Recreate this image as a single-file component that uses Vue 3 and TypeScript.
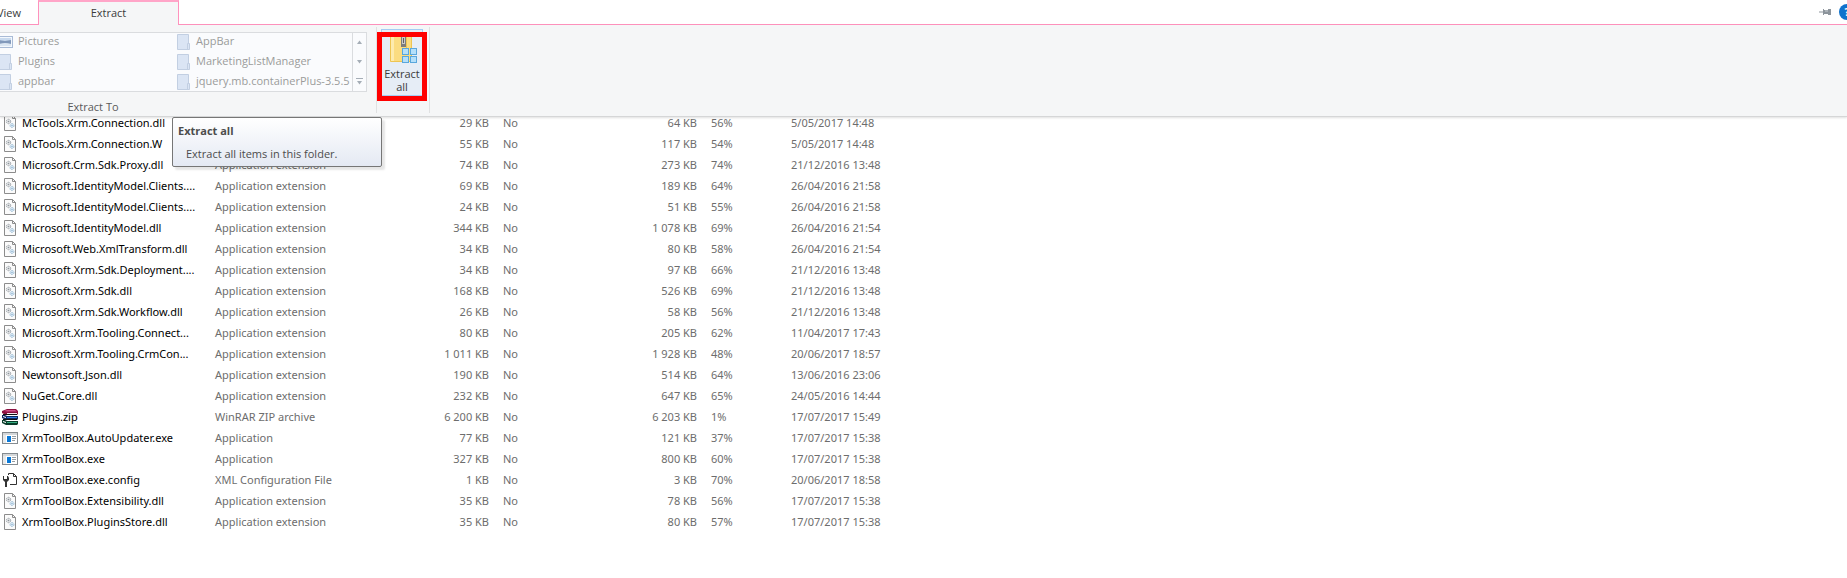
<script setup lang="ts">
type Kind = 'dll' | 'zip' | 'exe' | 'config'

interface FileRow {
  name: string
  kind: Kind
  packed: string
  size: string
  ratio: string
  date: string
}

const typeNames: Record<Kind, string> = {
  dll: 'Application extension',
  zip: 'WinRAR ZIP archive',
  exe: 'Application',
  config: 'XML Configuration File',
}

const file = (name: string, kind: Kind, packed: string, size: string, ratio: string, date: string): FileRow => ({
  name, kind, packed, size, ratio, date,
})

const files: FileRow[] = [
  file('McTools.Xrm.Connection.dll', 'dll', '29 KB', '64 KB', '56%', '5/05/2017 14:48'),
  file('McTools.Xrm.Connection.W', 'dll', '55 KB', '117 KB', '54%', '5/05/2017 14:48'),
  file('Microsoft.Crm.Sdk.Proxy.dll', 'dll', '74 KB', '273 KB', '74%', '21/12/2016 13:48'),
  file('Microsoft.IdentityModel.Clients....', 'dll', '69 KB', '189 KB', '64%', '26/04/2016 21:58'),
  file('Microsoft.IdentityModel.Clients....', 'dll', '24 KB', '51 KB', '55%', '26/04/2016 21:58'),
  file('Microsoft.IdentityModel.dll', 'dll', '344 KB', '1 078 KB', '69%', '26/04/2016 21:54'),
  file('Microsoft.Web.XmlTransform.dll', 'dll', '34 KB', '80 KB', '58%', '26/04/2016 21:54'),
  file('Microsoft.Xrm.Sdk.Deployment....', 'dll', '34 KB', '97 KB', '66%', '21/12/2016 13:48'),
  file('Microsoft.Xrm.Sdk.dll', 'dll', '168 KB', '526 KB', '69%', '21/12/2016 13:48'),
  file('Microsoft.Xrm.Sdk.Workflow.dll', 'dll', '26 KB', '58 KB', '56%', '21/12/2016 13:48'),
  file('Microsoft.Xrm.Tooling.Connect...', 'dll', '80 KB', '205 KB', '62%', '11/04/2017 17:43'),
  file('Microsoft.Xrm.Tooling.CrmCon...', 'dll', '1 011 KB', '1 928 KB', '48%', '20/06/2017 18:57'),
  file('Newtonsoft.Json.dll', 'dll', '190 KB', '514 KB', '64%', '13/06/2016 23:06'),
  file('NuGet.Core.dll', 'dll', '232 KB', '647 KB', '65%', '24/05/2016 14:44'),
  file('Plugins.zip', 'zip', '6 200 KB', '6 203 KB', '1%', '17/07/2017 15:49'),
  file('XrmToolBox.AutoUpdater.exe', 'exe', '77 KB', '121 KB', '37%', '17/07/2017 15:38'),
  file('XrmToolBox.exe', 'exe', '327 KB', '800 KB', '60%', '17/07/2017 15:38'),
  file('XrmToolBox.exe.config', 'config', '1 KB', '3 KB', '70%', '20/06/2017 18:58'),
  file('XrmToolBox.Extensibility.dll', 'dll', '35 KB', '78 KB', '56%', '17/07/2017 15:38'),
  file('XrmToolBox.PluginsStore.dll', 'dll', '35 KB', '80 KB', '57%', '17/07/2017 15:38'),
]

const destinations: string[] = [
  'Pictures', 'AppBar',
  'Plugins', 'MarketingListManager',
  'appbar', 'jquery.mb.containerPlus-3.5.5',
]
</script>

<template>
  <div class="window">
    <header class="top">
      <nav class="tabs">
        <button class="tab view" type="button">View</button>
        <button class="tab active" type="button">Extract</button>
        <div class="tools">
          <button class="tool" type="button" aria-label="Pin the ribbon">
            <svg width="12" height="8" viewBox="0 0 12 8"><path d="M0 4H5" stroke="#8d959c" stroke-width="1" /><path d="M4 1H5V2H9V1H12V7H9V6H5V7H4Z" fill="#8d959c" /><path d="M6 3H9" stroke="#c9ced2" /></svg>
          </button>
          <button class="tool help" type="button" aria-label="Help">?</button>
        </div>
      </nav>

      <section class="ribbon">
        <div class="group extract-to">
          <div class="gallery">
            <div class="items">
              <button v-for="(d, i) in destinations" :key="d" class="item" type="button">
                <svg v-if="i === 0" width="16" height="12" viewBox="0 0 16 12">
                  <rect x=".5" y=".5" width="15" height="11" fill="#f4f8fd" stroke="#a9bbd6" />
                  <rect x="2" y="2" width="12" height="8" fill="#c9daee" />
                  <path d="M2 4L8 5L14 4V8H2Z" fill="#8299bb" />
                  <path d="M2 8Q8 6 14 8V10H2Z" fill="#dce7f3" />
                </svg>
                <svg v-else width="13" height="16" viewBox="0 0 13 16">
                  <path d="M.5.5H11.5V9.5H12.5V15.5H.5Z" fill="#dbe5f4" stroke="#c2cfe2" />
                  <path d="M10.500 15V9.500H12" fill="none" stroke="#c2cfe2" />
                </svg>
                <span>{{ d }}</span>
              </button>
            </div>
            <div class="scroll">
              <button type="button" aria-label="Previous row"><svg width="7" height="7" viewBox="0 0 7 7"><path d="M3.500 1.500L6 5H1Z" fill="#a5adb6" /></svg></button>
              <button type="button" aria-label="Next row"><svg width="7" height="7" viewBox="0 0 7 7"><path d="M3.500 5.500L6 2H1Z" fill="#a5adb6" /></svg></button>
              <button type="button" aria-label="More destinations"><svg width="7" height="7" viewBox="0 0 7 7"><path d="M0 .5H7" stroke="#a5adb6" /><path d="M3.500 6.500L6 3H1Z" fill="#a5adb6" /></svg></button>
            </div>
          </div>
          <div class="caption">Extract To</div>
        </div>

        <div class="group extract-all">
          <button class="big" type="button" aria-describedby="extract-tip">
            <svg width="32" height="32" viewBox="0 0 32 32">
              <path d="M4.500 0H25.500V29.500H4.500Z" fill="#fbdc81" stroke="#eec552" />
              <path d="M5 0H8V29H5Z" fill="#fdebaf" />
              <path d="M20.500 0V20" stroke="#eec552" />
              <rect x="15" y="0" width="5" height="15" fill="#7c7c7c" />
              <path d="M16 1H19M16 3H19M16 9H19" stroke="#d8d8d8" />
              <rect x="16.500" y="5.500" width="2" height="6" fill="#5f5f5f" stroke="#c9c9c9" />
              <g fill="#b5e0fa" stroke="#5aa7dc">
                <rect x="16.500" y="16.500" width="6" height="6" /><rect x="24.500" y="16.500" width="6" height="6" />
                <rect x="16.500" y="24.500" width="6" height="6" /><rect x="24.500" y="24.500" width="6" height="6" />
              </g>
            </svg>
            <span>Extract<br>all</span>
          </button>
          <div class="highlight"></div>
        </div>
      </section>

      <div id="extract-tip" class="tip" role="tooltip">
        <strong>Extract all</strong>
        <p>Extract all items in this folder.</p>
      </div>
    </header>

    <main class="list">
      <table>
        <colgroup><col class="c-name"><col class="c-type"><col class="c-packed"><col class="c-lock"><col class="c-size"><col class="c-ratio"><col></colgroup>
        <tbody>
          <tr v-for="(f, i) in files" :key="i">
            <td class="name">
              <div class="label">
                <svg v-if="f.kind === 'dll'" width="16" height="16" viewBox="0 0 16 16">
                  <path d="M2.500.5H10.500L13.500 3.500V15.500H2.500Z" fill="#fbfbfb" stroke="#8c8c8c" />
                  <path d="M10.500.5V3.500H13.500" fill="none" stroke="#8c8c8c" />
                  <circle cx="6.500" cy="6.500" r="2.200" fill="#e2e4e6" stroke="#a0a6ab" stroke-dasharray="1.500 .7" /><circle cx="6.500" cy="6.500" r=".8" fill="#8b949b" />
                  <circle cx="10" cy="10.500" r="2" fill="#dcebf7" stroke="#9dbcd3" stroke-dasharray="1.500 .7" /><circle cx="10" cy="10.500" r=".7" fill="#86abc8" />
                </svg>
                <svg v-else-if="f.kind === 'zip'" width="16" height="16" viewBox="0 0 16 16">
                  <path d="M0 2L5 0H14L16 2V5L15 6H4L0 4Z" fill="#8c1040" /><path d="M2 2L5 1H13L15 2.500H5Z" fill="#d2508a" /><path d="M5 4.500H15" stroke="#f6e6ee" />
                  <path d="M0 6H3L5 7H16V10L15 11H4L0 9Z" fill="#0e2560" /><path d="M5 8.500H15" stroke="#2f7fe0" /><path d="M1 7.500L4 8.500" stroke="#fff" />
                  <path d="M0 11H3L5 12H16V15L15 16H4L0 14Z" fill="#083c2a" /><path d="M5 13.500H15" stroke="#35ad80" /><path d="M1 12.500L4 13.500" stroke="#fff" />
                  <path d="M1 5.500H15M1 10.500H15" stroke="#111" />
                </svg>
                <svg v-else-if="f.kind === 'exe'" width="16" height="16" viewBox="0 0 16 16">
                  <rect x=".5" y="2.500" width="15" height="11" fill="#fff" stroke="#858b90" />
                  <path d="M1 3H15V5H1Z" fill="#d4d7d9" /><path d="M1 5H4V13H1Z" fill="#e6e8e9" />
                  <rect x="5" y="6" width="4" height="6" fill="#0878d8" /><path d="M10 6.500H14M10 8.500H14M10 10.500H13" stroke="#949ba1" />
                </svg>
                <svg v-else width="16" height="16" viewBox="0 0 16 16">
                  <path d="M6.500 3V1.500H11.500L14.500 4.500V12.500H8" fill="#fff" stroke="#333" /><path d="M11.500 1.500V4.500H14.500" fill="none" stroke="#333" />
                  <path d="M1 4H2V7H5V4H6L7 6V8L5 10V15H3V10L1 8Z" fill="#333" />
                </svg>
                <span>{{ f.name }}</span>
              </div>
            </td>
            <td>{{ typeNames[f.kind] }}</td>
            <td class="num">{{ f.packed }}</td>
            <td>No</td>
            <td class="num">{{ f.size }}</td>
            <td>{{ f.ratio }}</td>
            <td>{{ f.date }}</td>
          </tr>
        </tbody>
      </table>
    </main>
  </div>
</template>

<style>
body { background: #fff; overflow: hidden; }
</style>

<style scoped>
.window { min-height: 100vh; overflow: hidden; background: #fff; font-family: "Open Sans", "Noto Sans", sans-serif; font-size: 11px; color: #6d6d6d; }
button { font: inherit; margin: 0; padding: 0; border: 0; background: none; color: inherit; }
svg { display: block; flex: none; }

.top { position: relative; z-index: 2; }
.tabs { display: flex; height: 24px; border-bottom: 1px solid #ff92bd; color: #3b3b3b; }
.tab { height: 25px; }
.view { width: 38px; padding-right: 17px; line-height: 26px; display: flex; justify-content: flex-end; }
.active { width: 141px; box-sizing: border-box; padding-bottom: 2px; line-height: 20px; background: #f5f6f7; border: 1px solid #ff92bd; border-top: 2px solid #ffa5c8; border-bottom: 0; }
.tools { margin-left: auto; margin-right: -8px; display: flex; align-items: center; gap: 8px; }
.help { width: 16px; height: 16px; border-radius: 8px; background: #0f72cc; color: #fff; font-weight: 700; line-height: 16px; }

.ribbon { display: flex; box-sizing: border-box; height: 92px; background: #f5f6f7; border-bottom: 1px solid #d5d6d7; box-shadow: 0 1px 2px #0000001f; }
.group { box-sizing: border-box; height: 86px; margin-top: 2px; border-right: 1px solid #e0e1e2; }
.extract-to { width: 377px; padding-top: 5px; }
.gallery { display: flex; box-sizing: border-box; width: 371px; height: 60px; margin-left: -4px; border: 1px solid #dadcdf; background: #fafbfd; }
.items { flex: 1; display: grid; grid-template-columns: 178px 1fr; grid-template-rows: repeat(3, 20px); padding-left: 2px; margin-bottom: -2px; }
.item { display: flex; align-items: center; gap: 6px; height: 18px; line-height: 16px; color: #9b9b9b; white-space: nowrap; }
.item span { padding-bottom: 2px; }
.item:first-child { gap: 5px; margin-left: -2px; }
.scroll { width: 13px; display: flex; flex-direction: column; border-left: 1px solid #dadcdf; }
.scroll button { flex: 1; display: flex; align-items: center; justify-content: center; }
.caption { width: 186px; margin-top: 7px; line-height: 16px; text-align: center; color: #5a5a5a; }
.extract-all { position: relative; width: 53px; padding: 2px 0 0 4px; }
.big { box-sizing: border-box; width: 42px; height: 67px; border: 1px solid #a5cdf3; background: #e6edf6; display: flex; flex-direction: column; align-items: center; color: #3b3b3b; line-height: 13px; }
.big svg { margin-top: 2px; }
.big span { margin-top: 3px; }
.highlight { position: absolute; box-sizing: border-box; left: 0; top: 5px; width: 50px; height: 69px; border: 5px solid #f00; }

.tip { position: absolute; left: 172px; top: 117px; box-sizing: border-box; width: 210px; height: 50px; padding: 5px; border: 1px solid #767676; border-radius: 2px; background: linear-gradient(#fff, #e4e9f3); box-shadow: 3px 3px 2px #0000001a; color: #4c4c4c; line-height: 15px; }
.tip p { margin: 8px 0 0 8px; }

.list { margin-top: -5px; font-family: "Noto Sans", "Open Sans", sans-serif; }
table { width: 100%; table-layout: fixed; border-collapse: collapse; }
.c-name { width: 207px; }
.c-type { width: 193px; }
.c-packed { width: 95px; }
.c-lock { width: 108px; }
.c-size { width: 100px; }
.c-ratio { width: 80px; }
td { height: 21px; line-height: 16px; padding: 0 6px 0 8px; white-space: nowrap; overflow: hidden; }
td.name { padding: 0 0 0 2px; color: #000; }
.label { display: flex; align-items: center; gap: 4px; }
.num { text-align: right; }
</style>
